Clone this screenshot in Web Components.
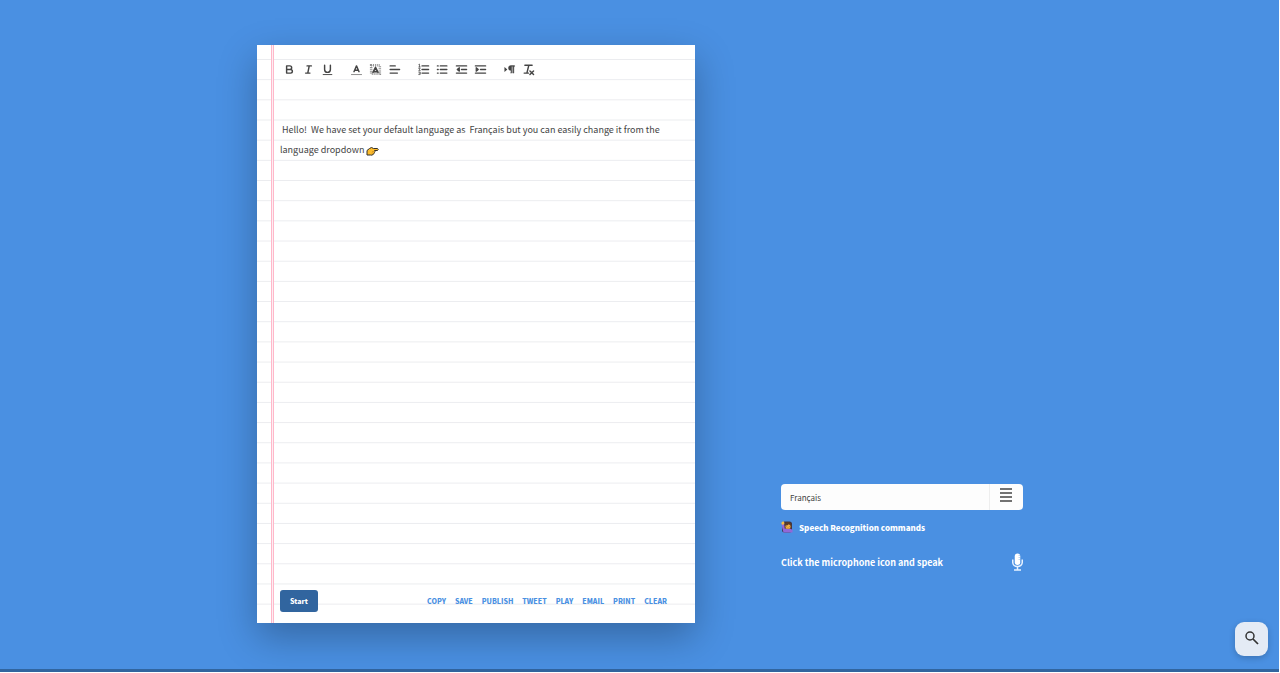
<!DOCTYPE html>
<html lang="en">
<head>
<meta charset="utf-8">
<meta name="viewport" content="width=device-width, initial-scale=1">
<title>Dictation</title>
<style>
  html { background: #fff; }
  body { margin: 0; font-family: "Noto Sans CJK SC", "Noto Sans", sans-serif; color: #444; }
</style>
</head>
<body>
<dictation-page>
  <note-paper>
    <editor-toolbar slot="toolbar"></editor-toolbar>
    <note-text></note-text>
    <note-actions slot="footer"></note-actions>
  </note-paper>
  <language-panel slot="side"></language-panel>
  <search-button slot="float"></search-button>
</dictation-page>

<script>
const define = (name, html) => customElements.define(name, class extends HTMLElement {
  constructor() {
    super();
    this.attachShadow({ mode: 'open' }).innerHTML = html;
  }
});

define('dictation-page', `
<style>
  :host { display: block; padding: 0 1px 1px 0; box-sizing: border-box; min-height: 100vh; }
  main { box-sizing: border-box; min-height: calc(100vh - 1px); background: #4a90e2;
    border-bottom: 3px solid #31659f; padding: 45px 0 45px 1px; display: flex; justify-content: center; align-items: flex-start; }
  .wrap { display: flex; gap: 86px; align-items: flex-end; }
  ::slotted(note-paper) { width: 438px; }
  ::slotted(language-panel) { width: 242px; }
</style>
<main><div class="wrap"><slot></slot><slot name="side"></slot></div></main>
<slot name="float"></slot>`);

define('note-paper', `
<style>
  :host { display: flex; flex-direction: column; box-sizing: border-box; min-height: calc(100vh - 95px);
    padding: 14px 24px 11px 23px;
    background:
      linear-gradient(90deg, #ffb8ca 1px, #fdeef2 1px 2px, #ffb8ca 2px) 14px 0 / 3px 100% no-repeat,
      linear-gradient(#ebecef 1px, transparent 1px) 0 14px / 100% calc((100% - 13px) / 28),
      #fff;
    box-shadow: 0 14px 36px rgba(0, 0, 0, .28); }
  article { flex: 1; padding-top: 41px; }
</style>
<slot name="toolbar"></slot>
<article><slot></slot></article>
<slot name="footer"></slot>`);

const icons = {
  bold: '<path d="M5 4h4.500a2.500 2.500 0 0 1 0 5H5zM5 9h5.500a2.500 2.500 0 0 1 0 5H5z"/>',
  italic: '<path d="M7 4h6M5 14h6M8 14l2-10"/>',
  underline: '<path d="M5 3v6a4 4 0 0 0 8 0V3"/><path d="M3 16h12" stroke-width="1.300"/>',
  color: '<path d="M5.500 12L9 4l3.500 8M6.500 10h5"/><path d="M2 16h14" stroke-width="1.200" opacity=".7"/>',
  background: '<path d="M3 3h12v12H3z" stroke-dasharray="1.300 1.300" stroke-width="3.500" stroke-linecap="butt" stroke-linejoin="miter" opacity=".6"/><path d="M5.500 13L9 6l3.500 7M6.500 12h5" stroke-width="2.200"/>',
  align: '<path d="M3 4h7M3 9h13M3 14h10"/>',
  ordered: '<path d="M7 4h9M7 9h9M7 14h9"/><path d="M2.500 5.500h2M3.500 5.500v-4l-1 .5M2.400 7.500h2L2.500 10.500h2M2.400 12.500h2v3.500h-2M3 14h1.500" stroke-width="1"/>',
  bullet: '<path d="M6 4h9M6 9h9M6 14h9M2 4h1M2 9h1M2 14h1"/>',
  outdent: '<path d="M2 4h14M2 14h14M9 9h7"/><path d="M6 6.500V11.500L3 9z" fill="#444" stroke-width="1.500"/>',
  indent: '<path d="M2 4h14M2 14h14M9 9h7"/><path d="M3 6.500V11.500L6 9z" fill="#444" stroke-width="1.500"/>',
  direction: '<path d="M2 5.500v7l4-3.500z" fill="#444" stroke="none"/><path d="M11 10.500a3.500 3.500 0 0 1 0-7h5v1.500h-1v9h-1.500V5H12v9h-1z" fill="#444" stroke-width=".6"/>',
  clean: '<path d="M4 3h10M7 13L9.500 3M3 14h6M11 11l5 5M16 11l-5 5"/>'
};
const groups = [
  [['bold', 'Bold'], ['italic', 'Italic'], ['underline', 'Underline']],
  [['color', 'Text colour'], ['background', 'Background colour'], ['align', 'Alignment']],
  [['ordered', 'Numbered list'], ['bullet', 'Bulleted list'], ['outdent', 'Decrease indent'], ['indent', 'Increase indent']],
  [['direction', 'Text direction'], ['clean', 'Clear formatting']]
];
define('editor-toolbar', `
<style>
  :host { display: flex; gap: 10px; height: 20px; }
  div { display: flex; }
  button { width: 19px; height: 20px; padding: 0; border: 0; background: none; display: grid; place-items: center; cursor: pointer; }
  svg { width: 13px; height: 13px; fill: none; stroke: #444; stroke-width: 2; stroke-linecap: round; stroke-linejoin: round; }
</style>
${groups.map(g => `<div role="group">${g.map(([k, label]) =>
  `<button type="button" aria-label="${label}"><svg viewBox="0 0 18 18" aria-hidden="true">${icons[k]}</svg></button>`).join('')}</div>`).join('')}`);

define('note-text', `
<style>
  :host { display: block; font-size: 9px; line-height: 20px; }
  p { margin: 0; }
  svg { width: 13px; height: 10px; vertical-align: -3px; }
</style>
<p>&nbsp;Hello!&nbsp; We have set your default language as&nbsp; Français but you can easily change it from the language dropdown
<svg viewBox="0 0 26 20" role="img" aria-label="Pointing right"><path d="M2 9l5-4q4-4 8 0h8q3 2 0 4h-6q2 2 0 4-1 3-3 4-2 2-5 1H2z" fill="#fdbc2c" stroke="#33302b" stroke-width="2" stroke-linejoin="round"/><path d="M12 11h4M11 14h4" stroke="#b47a1c" stroke-width="1"/></svg></p>`);

define('note-actions', `
<style>
  :host { display: flex; justify-content: space-between; align-items: center; }
  button { box-sizing: border-box; width: 38px; height: 22px; padding: 0; border: 0; border-radius: 3px;
    background: #31659f; color: #fff; font: 900 7px/20px "Noto Sans CJK SC", "Noto Sans", sans-serif; cursor: pointer; }
  nav { display: flex; gap: 9px; padding-right: 4px; }
  a { color: #4a90e2; text-decoration: none; font-size: 7px; font-weight: 900; line-height: 20px; }
</style>
<button type="button">Start</button>
<nav aria-label="Note actions">${['COPY', 'SAVE', 'PUBLISH', 'TWEET', 'PLAY', 'EMAIL', 'PRINT', 'CLEAR'].map(t => `<a href="#${t.toLowerCase()}">${t}</a>`).join('')}</nav>`);

define('language-panel', `
<style>
  :host { display: block; padding-bottom: 51px; color: #fff; font-size: 9px; font-weight: 700; }
  .field { display: flex; height: 26px; box-sizing: border-box; background: #fdfdfd; border-radius: 4px; overflow: hidden; }
  select { flex: 1; min-width: 0; appearance: none; border: 0; background: none; padding: 2px 9px 0; color: #444;
    font: 400 8px/20px "Noto Sans CJK SC", "Noto Sans", sans-serif; }
  .field button { width: 34px; border: 0; border-left: 1px solid #eee; background: none; padding: 0 1px 4px 0; display: grid; place-items: center; }
  .menu { width: 12px; height: 14px; }
  a { display: flex; align-items: center; gap: 6px; height: 20px; margin-top: 7px; color: inherit; text-decoration: none; font-size: 8px; font-weight: 900; }
  .person { width: 12px; height: 12px; }
  .speak { display: flex; align-items: center; justify-content: space-between; height: 20px; margin-top: 15px; }
  .speak button { border: 0; background: none; padding: 0; display: flex; }
  .mic { width: 11px; height: 18px; }
</style>
<div class="field">
  <select aria-label="Language"><option>Français</option></select>
  <button type="button" aria-label="Language list"><svg class="menu" viewBox="0 0 12 14"><path d="M0 1h12M0 5h12M0 9h12M0 13h12" stroke="#444" stroke-width="1.600"/></svg></button>
</div>
<a href="#commands"><svg class="person" viewBox="0 0 24 24" aria-hidden="true">
  <rect x="2" y="1" width="20" height="22" rx="5" fill="#3c3546"/>
  <path d="M1 5l5-1 2 8 4 3h7l4 3v5H5q-3-9-4-18z" fill="#9168d8"/>
  <path d="M1 3q2-3 5-2l1 4-3 3-3-2z" fill="#f4bd47"/>
  <path d="M7 15V8q1-6 7-6t7 6v7z" fill="#5b3b2a"/>
  <circle cx="14" cy="11" r="5" fill="#f3b043"/><path d="M9 9q5 0 7-3l3 3V6l-5-2-5 2z" fill="#5b3b2a"/><path d="M11 11h1m4 0h1M13 14h2" stroke="#5b3b2a"/>
</svg><span>Speech Recognition commands</span></a>
<div class="speak"><span>Click the microphone icon and speak</span>
  <button type="button" aria-label="Microphone"><svg class="mic" viewBox="0 0 22 36"><rect x="5.500" y="1" width="11" height="23" rx="5.500" fill="#fff"/><path d="M13 5h3M13 9h3M13 13h3" stroke="#a9caef" stroke-width="1.500"/><path d="M1.500 13v6a9.500 8 0 0 0 19 0v-6M11 27v6M4 34h14" fill="none" stroke="#e8f2ff" stroke-width="3"/></svg></button>
</div>`);

define('search-button', `
<style>
  :host { position: fixed; right: 12px; bottom: 17px; display: block; }
  button { width: 33px; height: 34px; border: 0; border-radius: 9px; background: #e4ebf5; padding: 0 0 3px;
    display: grid; place-items: center; box-shadow: 0 2px 6px rgba(0, 0, 0, .2); }
  svg { width: 14px; height: 14px; }
</style>
<button type="button" aria-label="Search"><svg viewBox="0 0 28 28" fill="none" stroke="#333"><circle cx="10" cy="10" r="8" stroke-width="3"/><path d="M16 16l10 10" stroke-width="3.500"/></svg></button>`);
</script>
</body>
</html>
